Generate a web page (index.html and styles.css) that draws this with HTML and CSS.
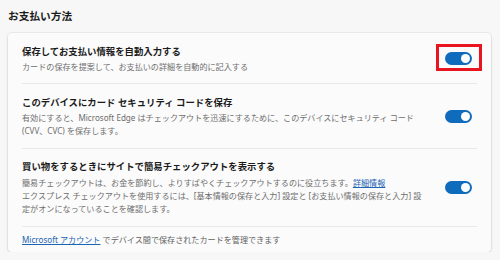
FILE: index.html
```html
<!DOCTYPE html>
<html lang="ja">
<head>
  <meta charset="UTF-8">
  <title>お支払い方法</title>
  <link rel="stylesheet" href="styles.css">
</head>
<body>
  <h2 class="section-title">お支払い方法</h2>

  <div class="card">
    <div class="row">
      <div class="row-text">
        <div class="row-title">保存してお支払い情報を自動入力する</div>
        <div class="row-desc">カードの保存を提案して、お支払いの詳細を自動的に記入する</div>
      </div>
      <div class="toggle-wrap">
        <div class="toggle on"><span class="knob"></span></div>
        <div class="highlight"></div>
      </div>
    </div>

    <div class="row">
      <div class="row-text">
        <div class="row-title">このデバイスにカード セキュリティ コードを保存</div>
        <div class="row-desc">有効にすると、Microsoft Edge はチェックアウトを迅速にするために、このデバイスにセキュリティ コード<br>(CVV、CVC) を保存します。</div>
      </div>
      <div class="toggle-wrap">
        <div class="toggle on"><span class="knob"></span></div>
      </div>
    </div>

    <div class="row">
      <div class="row-text">
        <div class="row-title">買い物をするときにサイトで簡易チェックアウトを表示する</div>
        <div class="row-desc">簡易チェックアウトは、お金を節約し、よりすばやくチェックアウトするのに役立ちます。<a href="#">詳細情報</a><br>エクスプレス チェックアウトを使用するには、[基本情報の保存と入力] 設定と [お支払い情報の保存と入力] 設<br>定がオンになっていることを確認します。</div>
      </div>
      <div class="toggle-wrap">
        <div class="toggle on"><span class="knob"></span></div>
      </div>
    </div>

    <div class="footer">
      <a href="#">Microsoft アカウント</a> でデバイス間で保存されたカードを管理できます
    </div>
  </div>
</body>
</html>
```

FILE: styles.css
```css
body {
  margin: 0;
  padding: 8px 9px 0 8px;
  background: #f7f7f7;
  font-family: "Noto Sans", "Noto Sans CJK JP", sans-serif;
  color: #1b1b1b;
}

.section-title {
  margin: 0 0 8px;
  font-size: 10.7px;
  line-height: 17px;
  font-weight: 600;
}

.card {
  background: #fbfbfb;
  border-radius: 4px;
  padding: 0 14px;
  box-shadow: 0 0 0 1px rgba(0, 0, 0, 0.04), 0 1px 3px rgba(0, 0, 0, 0.12);
}

.row {
  display: flex;
  align-items: center;
  padding: 11.5px 0 10px;
  border-bottom: 1px solid #e9e9e9;
}

.row-text {
  flex: 1;
  white-space: nowrap;
}

.row-title {
  font-size: 9.4px;
  line-height: 13.4px;
  font-weight: 600;
  color: #1b1b1b;
  margin-bottom: 2px;
}

.row-desc {
  font-size: 8.1px;
  line-height: 13.3px;
  color: #6e6e6e;
}

a {
  color: #1a64b4;
  text-decoration: underline;
}

.toggle-wrap {
  position: relative;
  margin-right: 5px;
}

.toggle {
  width: 27px;
  height: 13px;
  border-radius: 7px;
  background: #0f6cbd;
  display: flex;
  align-items: center;
  justify-content: flex-end;
  padding: 0 2px;
  box-sizing: border-box;
}

.knob {
  width: 9px;
  height: 9px;
  border-radius: 50%;
  background: #ffffff;
}

.highlight {
  position: absolute;
  top: -8px;
  left: -9px;
  right: -10px;
  bottom: -6px;
  border: 3.5px solid #e8141e;
}

.footer {
  font-size: 8.1px;
  line-height: 13px;
  padding: 6px 0;
  color: #616161;
}
```
